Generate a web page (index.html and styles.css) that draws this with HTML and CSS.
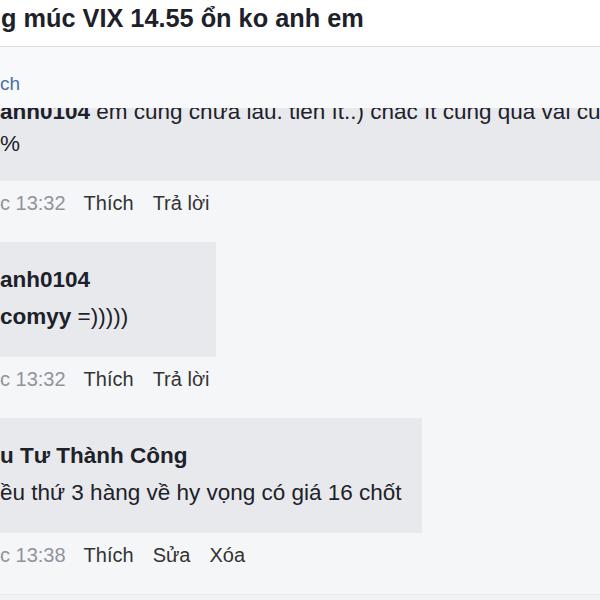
FILE: index.html
```html
<!DOCTYPE html>
<html>

<head>
    <title>VIX 14.55</title>
    <link rel="stylesheet" href="styles.css">
</head>

<body>
    <div class="page">
        <div class="topic">
            <h1>g múc VIX 14.55 ổn ko anh em</h1>
        </div>

        <div class="thread">
            <div class="more-bar">
                <a href="#" class="more-link">ch</a>
            </div>

            <div class="comment">
                <div class="bubble bubble-wide bubble-clipped">
                    <div class="bubble-inner">
                        <p class="line"><strong>anh0104</strong> em cũng chưa lâu. tiền ít..) chắc ít cũng quá vài củ</p>
                        <p class="line">%</p>
                    </div>
                </div>
                <div class="actions">
                    <span class="time">c 13:32</span>
                    <a href="#">Thích</a>
                    <a href="#">Trả lời</a>
                </div>
            </div>

            <div class="comment">
                <div class="bubble bubble-short">
                    <div class="name">anh0104</div>
                    <p class="line"><strong>comyy</strong> =)))))</p>
                </div>
                <div class="actions">
                    <span class="time">c 13:32</span>
                    <a href="#">Thích</a>
                    <a href="#">Trả lời</a>
                </div>
            </div>

            <div class="comment">
                <div class="bubble">
                    <div class="name">u Tư Thành Công</div>
                    <p class="line">ều thứ 3 hàng về hy vọng có giá 16 chốt</p>
                </div>
                <div class="actions">
                    <span class="time">c 13:38</span>
                    <a href="#">Thích</a>
                    <a href="#">Sửa</a>
                    <a href="#">Xóa</a>
                </div>
            </div>

            <div class="composer"></div>
        </div>
    </div>
</body>

</html>
```

FILE: styles.css
```css
body {
    margin: 0;
    font-family: "Liberation Sans", Arial, sans-serif;
    color: #1d2129;
    background: #f6f7f9;
}

.page {
    width: 600px;
    height: 600px;
    overflow: hidden;
}

.topic {
    height: 46px;
    background: #fff;
    border-bottom: 1px solid #dcdee2;
}

.topic h1 {
    margin: 0;
    padding: 4px 0 0 1px;
    font-size: 25.3px;
    line-height: 28px;
    font-weight: bold;
    white-space: nowrap;
}

.thread {
    background: #f5f6f8;
}

.more-bar {
    height: 61px;
    background: #f8f9fa;
    box-sizing: border-box;
    padding-top: 25px;
}

.more-link {
    color: #4a6ea8;
    text-decoration: none;
    font-size: 19px;
    line-height: 24px;
}

.comment {
    margin-bottom: 23px;
}

.bubble {
    display: inline-block;
    background: #e8e9ed;
    padding: 22px 20px 24px 0;
    white-space: nowrap;
}

.bubble-short {
    width: 196px;
}

.bubble-wide {
    display: block;
    width: 640px;
}

.bubble-clipped {
    overflow: hidden;
    padding-top: 0;
    padding-bottom: 21px;
}

.bubble-clipped .bubble-inner {
    margin-top: -12px;
}

.name {
    font-weight: bold;
    font-size: 22.5px;
    line-height: 32px;
    margin-bottom: 5px;
}

.line {
    margin: 0;
    font-size: 22.5px;
    line-height: 32px;
}

.actions {
    display: flex;
    gap: 19px;
    margin-top: 6px;
    font-size: 20px;
    line-height: 32px;
    white-space: nowrap;
}

.actions .time {
    color: #90949c;
    margin-right: -1px;
}

.actions a {
    color: #333;
    text-decoration: none;
}

.composer {
    height: 40px;
    border-top: 1px solid #e8e9ec;
    background: #f1f2f4;
}
```
